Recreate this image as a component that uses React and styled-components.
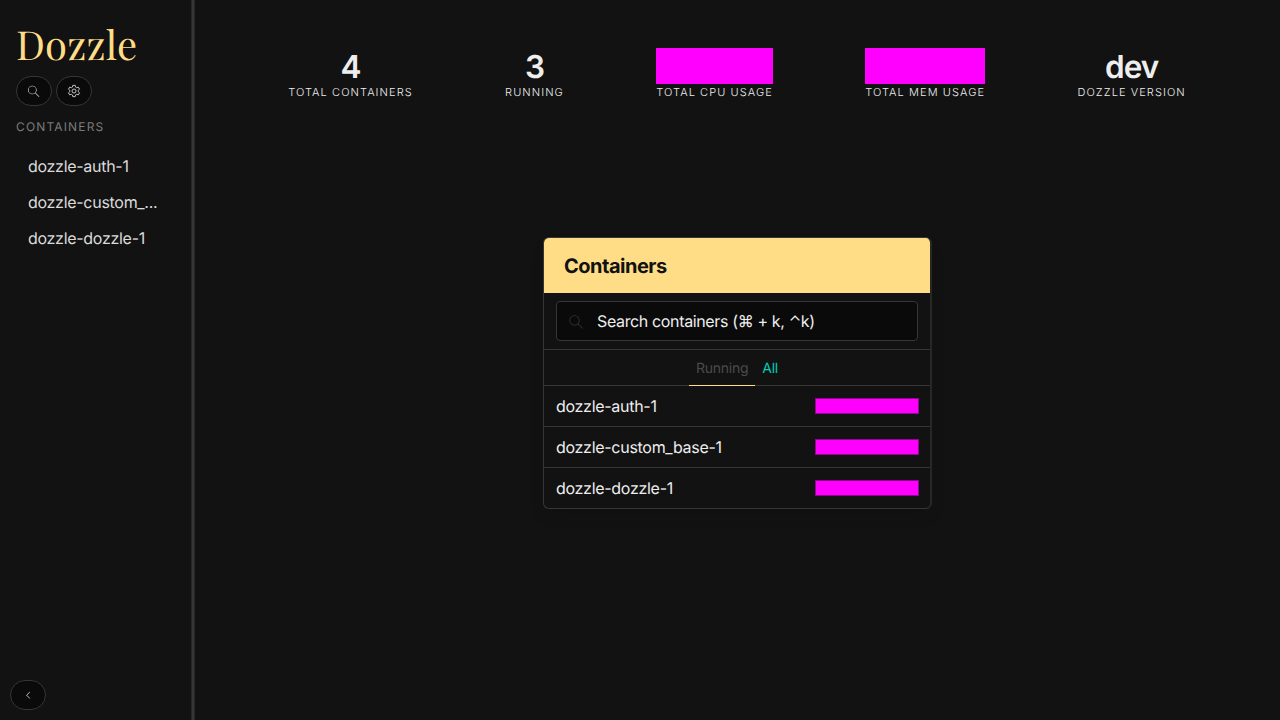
import React from "react";
import styled, { createGlobalStyle } from "styled-components";

const Global = createGlobalStyle`
  *, *::before, *::after { box-sizing: border-box; }
  html, body { margin: 0; height: 100%; }
  body {
    background: #121212;
    color: #eee;
    font-family: Inter, "Liberation Sans", sans-serif;
    font-size: 16px;
    line-height: 24px;
    letter-spacing: -0.29px;
    overflow: hidden;
    -webkit-font-smoothing: antialiased;
    text-rendering: geometricPrecision;
  }
`;

const Page = styled.div`
  display: flex;
  height: 100vh;
`;

const Sidebar = styled.aside`
  display: flex;
  flex-direction: column;
  width: 191px;
  padding: 16px 16px 10px;
`;

const Splitter = styled.div`
  width: 4px;
  background: #363636;
  border: solid #282828;
  border-width: 0 1px;
`;

const Logo = styled.h1`
  margin: 0;
  height: 60px;
  color: #ffdd87;
  font-family: "Playfair Display", "Liberation Serif", serif;
  font-size: 40px;
  font-weight: 400;
  line-height: 57px;
  letter-spacing: 0.2px;
`;

const ButtonRow = styled.div`
  display: flex;
  gap: 4px;
`;

const PillButton = styled.button`
  display: flex;
  align-items: center;
  justify-content: center;
  width: 36px;
  height: 30px;
  padding: 0;
  color: #dbdbdb;
  background: #0a0a0a;
  border: 1px solid #363636;
  border-radius: 15px;
`;

const CollapseButton = styled(PillButton)`
  margin: auto 0 0 -6px;
`;

const MenuLabel = styled.p`
  margin: 12px 0 12px;
  color: #7a7a7a;
  font-size: 12px;
  line-height: 18px;
  letter-spacing: 1.15px;
`;

const Menu = styled.ul`
  list-style: none;
  margin: 0;
  padding: 0;
`;

const MenuItem = styled.li`
  height: 36px;
  padding: 6px 12px;
  width: 158px;
  color: #dbdbdb;
  white-space: nowrap;
  overflow: hidden;
  text-overflow: ellipsis;
`;

const Main = styled.main`
  display: flex;
  flex-direction: column;
  align-items: center;
  flex: 1;
  padding: 48px;
`;

const Stats = styled.section`
  display: flex;
  align-self: stretch;
  height: 189px;
  margin-left: -1px;
`;

const Stat = styled.div`
  display: flex;
  flex: 1 0 auto;
  justify-content: center;
  text-align: center;
`;

const StatValue = styled.div`
  height: 36px;
  font-size: 31.5px;
  font-weight: 600;
  line-height: 38px;
  letter-spacing: -1px;
  background: ${(p) => (p.$masked ? "#f0f" : "transparent")};
`;

const StatLabel = styled.div`
  font-size: 11px;
  font-weight: 300;
  line-height: 17px;
  letter-spacing: 1.08px;
`;

const Panel = styled.section`
  width: 389px;
  border: 1px solid #363636;
  border-right: 2px solid #272727;
  border-radius: 6px;
  overflow: hidden;
  box-shadow: 0 8px 16px -2px rgba(10, 10, 10, 0.1);
`;

const PanelHeading = styled.h2`
  margin: 0;
  height: 55px;
  padding: 0 20px;
  background: #ffdd87;
  color: #121212;
  font-size: 20px;
  font-weight: 700;
  line-height: 57px;
  letter-spacing: -0.5px;
`;

const SearchBlock = styled.div`
  padding: 8px 12px;
  border-bottom: 1px solid #363636;
`;

const SearchField = styled.div`
  display: flex;
  align-items: center;
  height: 40px;
  padding-left: 10px;
  background: #0a0a0a;
  border: 1px solid #363636;
  border-radius: 4px;
  color: #eee;
  letter-spacing: -0.36px;
`;

const FieldIcon = styled.span`
  display: flex;
  width: 30px;
  color: #363636;
`;

const Tabs = styled.nav`
  display: flex;
  justify-content: center;
  height: 36px;
  font-size: 14px;
  line-height: 37px;
  letter-spacing: -0.25px;
  border-bottom: 1px solid #363636;
`;

const Tab = styled.span`
  height: 36px;
  padding: 0 7px;
  color: ${(p) => (p.$active ? "#4a4a4a" : "#00d1b2")};
  border-bottom: 1px solid ${(p) => (p.$active ? "#ffdd87" : "#363636")};
`;

const Row = styled.div`
  display: flex;
  align-items: center;
  justify-content: space-between;
  height: ${(p) => (p.$last ? 40 : 41)}px;
  padding: 0 11px 0 12px;
  border-bottom: ${(p) => (p.$last ? 0 : 1)}px solid #363636;
`;

const MaskedTime = styled.span`
  width: 104px;
  height: 16px;
  background: #f0f;
  border: 1px solid #8d088d;
`;

const MagnifyIcon = ({ size }) => (
  <svg width={size} height={size} viewBox="0 0 24 24" fill="currentColor">
    <path d="M9.5 4A6.5 6.5 0 0 1 16 10.5C16 12.12 15.41 13.6 14.43 14.73L20.08 20.38L19.37 21.09L13.72 15.44C12.59 16.41 11.11 17 9.5 17A6.5 6.5 0 0 1 9.5 4M9.5 5A5.5 5.5 0 0 0 9.5 16A5.5 5.5 0 0 0 9.5 5Z" />
  </svg>
);

const CogIcon = () => (
  <svg width="16" height="16" viewBox="0 0 24 24" fill="none" stroke="currentColor" strokeWidth="1.3" strokeLinejoin="round">
    <path d="M10.2 3.5H13.8L14.3 6.1L16 7.1L18.5 6.2L20.3 9.3L18.3 11V13L20.3 14.7L18.5 17.8L16 16.9L14.3 17.9L13.8 20.5H10.2L9.7 17.9L8 16.9L5.5 17.8L3.7 14.7L5.7 13V11L3.7 9.3L5.5 6.2L8 7.1L9.7 6.1Z" />
    <circle cx="12" cy="12" r="3" />
  </svg>
);

const ChevronIcon = () => (
  <svg width="16" height="16" viewBox="0 0 24 24" fill="none" stroke="currentColor" strokeWidth="1.3">
    <path d="M14.7 7.5L9.9 12.3L14.7 17.1" />
  </svg>
);

const stats = [
  { value: "4", label: "TOTAL CONTAINERS" },
  { value: "3", label: "RUNNING" },
  { masked: true, label: "TOTAL CPU USAGE" },
  { masked: true, label: "TOTAL MEM USAGE" },
  { value: "dev", label: "DOZZLE VERSION" },
];

const containers = ["dozzle-auth-1", "dozzle-custom_base-1", "dozzle-dozzle-1"];
const menuItems = ["dozzle-auth-1", "dozzle-custom_...", "dozzle-dozzle-1"];

export default function App() {
  return (
    <Page>
      <Global />
      <Sidebar>
        <Logo>Dozzle</Logo>
        <ButtonRow>
          <PillButton aria-label="Search"><MagnifyIcon size={16} /></PillButton>
          <PillButton aria-label="Settings"><CogIcon /></PillButton>
        </ButtonRow>
        <MenuLabel>CONTAINERS</MenuLabel>
        <Menu>
          {menuItems.map((name) => <MenuItem key={name}>{name}</MenuItem>)}
        </Menu>
        <CollapseButton aria-label="Collapse"><ChevronIcon /></CollapseButton>
      </Sidebar>
      <Splitter />
      <Main>
        <Stats>
          {stats.map((s) => (
            <Stat key={s.label}>
              <div>
                <StatValue $masked={s.masked}>{s.value}</StatValue>
                <StatLabel>{s.label}</StatLabel>
              </div>
            </Stat>
          ))}
        </Stats>
        <Panel>
          <PanelHeading>Containers</PanelHeading>
          <SearchBlock>
            <SearchField>
              <FieldIcon><MagnifyIcon size={19} /></FieldIcon>
              Search containers (⌘ + k, ⌃k)
            </SearchField>
          </SearchBlock>
          <Tabs>
            <Tab $active>Running</Tab>
            <Tab>All</Tab>
          </Tabs>
          {containers.map((name, i) => (
            <Row key={name} $last={i === containers.length - 1}>
              <span>{name}</span>
              <MaskedTime />
            </Row>
          ))}
        </Panel>
      </Main>
    </Page>
  );
}
